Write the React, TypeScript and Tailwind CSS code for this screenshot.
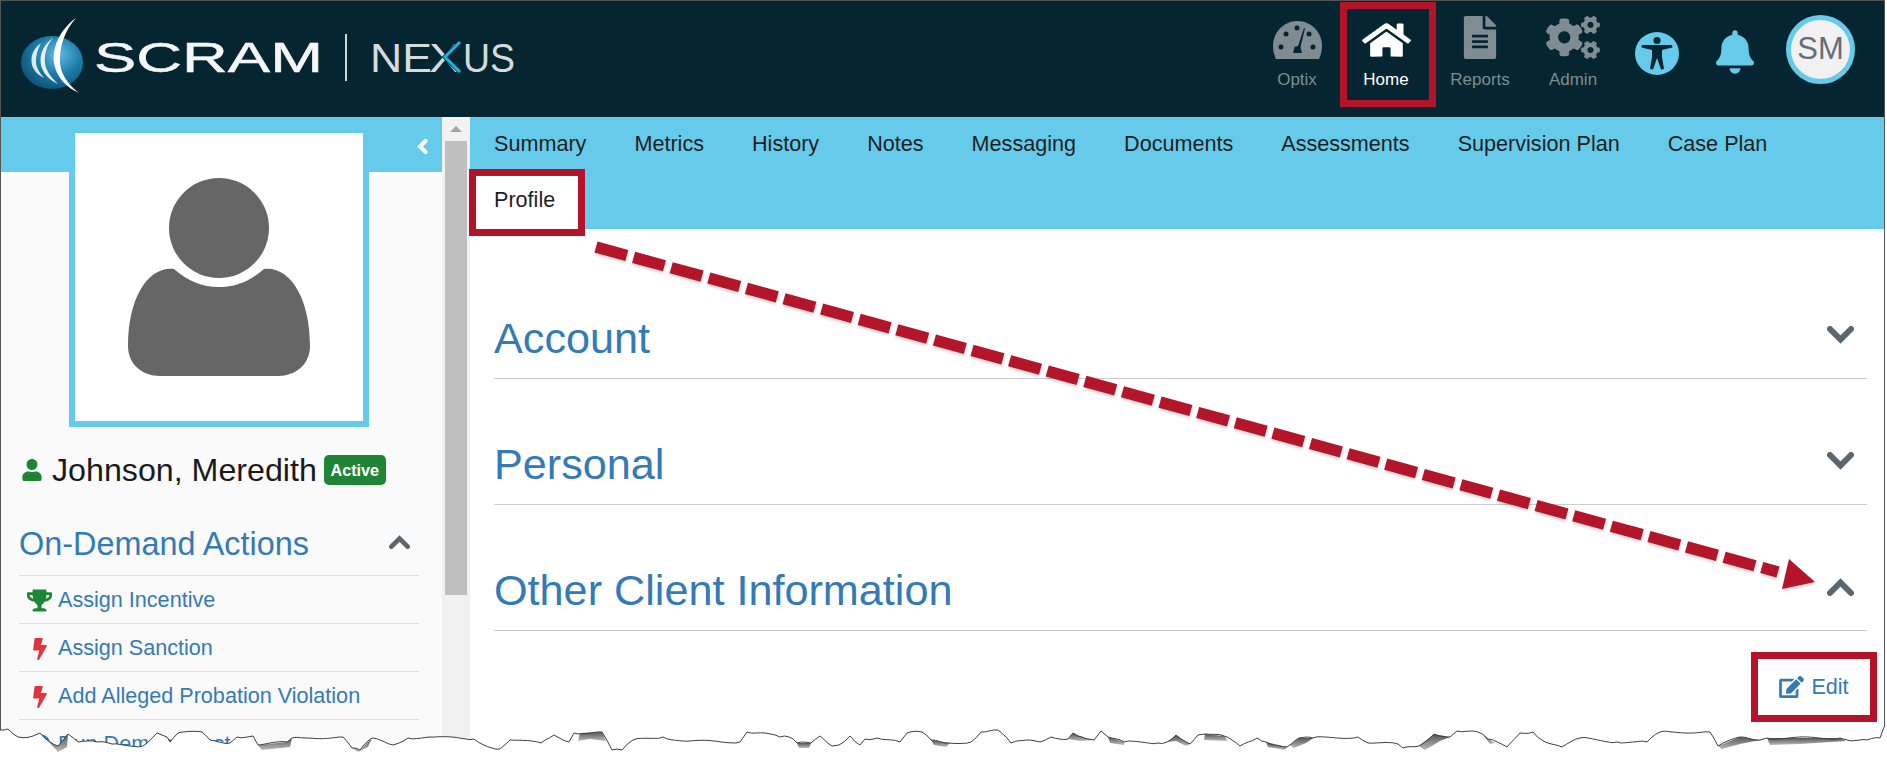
import { ReactNode } from 'react';
import { FaBell, FaBolt, FaCheckCircle, FaCogs, FaEdit, FaFileAlt, FaHome, FaTrophy, FaUser } from 'react-icons/fa';

const tabs = ['Summary', 'Metrics', 'History', 'Notes', 'Messaging', 'Documents', 'Assessments', 'Supervision Plan', 'Case Plan'];

// torn paper edge along the bottom of the screenshot
const tearPoints: number[][] = [
  [0, 730], [8, 729], [18, 737], [33, 736], [40, 733], [50, 742], [58, 746], [68, 734], [78, 742], [97, 742], [112, 744], [143, 746],
  [157, 733], [167, 737], [170, 742], [178, 733], [202, 732], [210, 740], [230, 743], [237, 737], [253, 736], [258, 745], [287, 742],
  [292, 738], [306, 738], [343, 737], [352, 748], [360, 750], [372, 738], [393, 745], [408, 738], [429, 737], [474, 739], [492, 748],
  [500, 749], [510, 740], [541, 743], [554, 735], [569, 742], [574, 733], [602, 732], [612, 750], [622, 750], [633, 740], [663, 737],
  [684, 741], [740, 742], [747, 732], [765, 733], [780, 737], [789, 737], [797, 743], [811, 743], [820, 736], [832, 746], [839, 745],
  [850, 736], [860, 745], [865, 739], [877, 738], [900, 742], [907, 733], [922, 732], [931, 740], [945, 743], [971, 742], [981, 732],
  [998, 730], [1011, 743], [1030, 740], [1040, 742], [1051, 737], [1068, 739], [1073, 733], [1082, 737], [1094, 740], [1101, 731],
  [1108, 737], [1124, 742], [1158, 743], [1167, 742], [1176, 735], [1190, 744], [1198, 735], [1205, 734], [1224, 736], [1240, 746],
  [1257, 738], [1266, 742], [1287, 747], [1299, 738], [1313, 738], [1358, 737], [1368, 743], [1398, 744], [1403, 748], [1419, 746],
  [1434, 734], [1450, 737], [1457, 731], [1478, 732], [1488, 739], [1507, 747], [1520, 733], [1533, 732], [1542, 740], [1562, 747],
  [1580, 738], [1617, 742], [1647, 742], [1660, 732], [1710, 732], [1718, 746], [1740, 737], [1760, 740], [1767, 738], [1840, 738],
  [1847, 740], [1867, 740], [1880, 738], [1884, 727],
];

function roughen(points: number[][]) {
  const out: string[] = [];
  let n = 0;
  points.forEach((p, i) => {
    out.push(`${p[0]},${p[1]}`);
    const next = points[i + 1];
    if (!next) return;
    const steps = Math.floor((next[0] - p[0]) / 4);
    for (let s = 1; s < steps; s++) {
      n += 1;
      const t = s / steps;
      const jitter = Math.sin(n * 12.9898) * 1.1;
      out.push(`${(p[0] + (next[0] - p[0]) * t).toFixed(1)},${(p[1] + (next[1] - p[1]) * t + jitter).toFixed(1)}`);
    }
  });
  return out.join(' ');
}

const tear = roughen(tearPoints);

const tearShades = [
  '48,741 58,746 68,734 67,747 58,752',
  '258,745 287,742 292,738 290,747 262,750',
  '352,748 360,750 372,738 368,747 358,752',
  '580,733 602,732 606,741 590,739 578,741',
  '797,743 811,743 809,748 799,748',
  '931,740 950,743 946,747 934,745',
  '1068,739 1073,733 1082,737 1094,740 1080,741',
  '1108,737 1124,742 1124,745 1110,743',
  '1167,742 1176,735 1190,744 1186,746 1176,741',
  '1205,734 1224,736 1228,741 1204,740',
  '1266,742 1287,747 1285,750 1268,747',
  '1290,745 1299,738 1313,738 1306,743 1294,748',
  '1419,746 1434,734 1450,737 1440,741 1425,750',
  '1483,735 1488,739 1495,743 1490,744',
  '1718,746 1740,737 1760,740 1740,744 1722,749',
  '1767,738 1840,738 1846,741 1800,744 1770,745',
];

function Logo() {
  return (
    <svg className="shrink-0" width="530" height="116" viewBox="0 0 530 116">
      <defs>
        <radialGradient id="sphere" cx="0.6" cy="0.35" r="0.75">
          <stop offset="0" stopColor="#62bde2" />
          <stop offset="0.5" stopColor="#1c7ba8" />
          <stop offset="1" stopColor="#0a4a6e" />
        </radialGradient>
      </defs>
      <ellipse cx="51" cy="61.5" rx="31" ry="26.5" fill="url(#sphere)" />
      <path d="M75 17 C58 29 51 48 53 62 C55 76 66 87 78 92 C68 84 60 74 59 62 C58 46 64 29 75 17Z" fill="#fff" />
      <path d="M52 37 C42 44 38 54 40 64 C42 72 48 79 57 83 C50 76 45 70 44 62 C43 53 46 44 52 37Z" fill="#e8f2f7" />
      <path d="M40 42 C32 48 29 56 31 64 C33 70 37 74 43 77 C38 71 35 66 35 60 C35 54 37 48 40 42Z" fill="#dbe9f0" />
      <text x="93" y="71" fontFamily="'Liberation Sans', sans-serif" fontSize="43" fill="#f4f6f7" stroke="#f4f6f7" strokeWidth="0.5" textLength="229" lengthAdjust="spacingAndGlyphs">
        SCRAM
      </text>
      <rect x="344" y="33" width="2" height="47" fill="#cfd6d8" />
      <g fontFamily="'Liberation Sans', sans-serif" fontSize="41" fill="#d5dbdd">
        <text x="369" y="71" textLength="62" lengthAdjust="spacingAndGlyphs">NE</text>
        <text x="428" y="71" textLength="32" lengthAdjust="spacingAndGlyphs">X</text>
        <text x="462" y="71" textLength="52" lengthAdjust="spacingAndGlyphs">US</text>
      </g>
      <path d="M460 41 L445 56 L460 71" fill="none" stroke="#052630" strokeWidth="6" />
      <path d="M459 41 L444 56 L459 71" fill="none" stroke="#1fb2de" strokeWidth="3" />
    </svg>
  );
}

function Gauge() {
  return (
    <svg width="49" height="38" viewBox="0 0 49 38">
      <path d="M3 38 C1 34 0 29 0 25 C0 11 11 0 24.5 0 C38 0 49 11 49 25 C49 29 48 34 46 38Z" fill="#7f8c92" />
      <g fill="#052630">
        <circle cx="8" cy="26" r="2.5" />
        <circle cx="13" cy="13" r="2.5" />
        <circle cx="24" cy="7" r="2.5" />
        <circle cx="36" cy="13" r="2.5" />
        <circle cx="40" cy="26" r="2.5" />
        <path d="M31 7 L32 7.5 L27.5 26 L29 32 L20 32 L21.5 26 L25 25Z" />
      </g>
    </svg>
  );
}

function AccessIcon() {
  return (
    <svg className="ml-[19px] mt-[31px]" width="44" height="43" viewBox="0 0 44 43">
      <ellipse cx="22" cy="21.5" rx="22" ry="21.5" fill="#66cbeb" />
      <circle cx="22" cy="8.5" r="3.6" fill="#052630" />
      <path d="M7 13 L37 13 L37.5 15.5 L27 18 L27 25 L29 37 L26 37.5 L22 26 L18 37.5 L15 37 L17 25 L17 18 L6.5 15.5Z" fill="#052630" />
    </svg>
  );
}

function Chevron({ up, className }: { up?: boolean; className: string }) {
  return (
    <svg className={className} viewBox="0 0 27 18" preserveAspectRatio="none">
      <polyline points={up ? '3,15 13.5,4.5 24,15' : '3,3 13.5,13.5 24,3'} fill="none" stroke="#5b6770" strokeWidth="6" strokeLinecap="round" strokeLinejoin="miter" />
    </svg>
  );
}

function NavItem({ label, icon, active, width }: { label: string; icon: ReactNode; active?: boolean; width: string }) {
  return (
    <div className={`relative flex h-[116px] flex-col items-center ${width} ${active ? 'text-white' : 'text-[#7f8c92]'}`}>
      <div className="mt-[14px] flex h-[44px] items-end justify-center">{icon}</div>
      <div className="mt-[10px] text-[17px] leading-[22px]">{label}</div>
      {active && <div className="absolute left-[-2px] right-[-6px] top-[1px] h-[105px] border-[7px] border-[#b31429]" />}
    </div>
  );
}

function Section({ title, open }: { title: string; open?: boolean }) {
  return (
    <div className="flex h-[126px] items-end justify-between border-b border-[#ccc] pb-[14px] pr-[13px]">
      <span className="text-[43.2px] leading-[52px] text-[#337ab7]">{title}</span>
      <Chevron up={open} className="mb-[20px] h-[18px] w-[27px]" />
    </div>
  );
}

function ActionRow({ icon, label }: { icon: ReactNode; label: string }) {
  return (
    <div className="flex h-[48px] items-center border-b border-[#ddd] pl-[8px] pt-[2px]">
      <div className="flex w-[25px] justify-center">{icon}</div>
      <span className="ml-[6px] text-[21.6px] text-[#337ab7]">{label}</span>
    </div>
  );
}

export default function App() {
  return (
    <div className="relative h-[763px] w-[1887px] overflow-hidden bg-white font-['Liberation_Sans',Arial,sans-serif]">
      <div className="h-full w-[1885px] border-x border-t border-[#555]">
        {/* Header */}
        <header className="flex h-[116px] items-start justify-between bg-[#052630] pr-[29px]">
          <Logo />
          <div className="flex items-start">
            <NavItem label="Optix" width="w-[90px]" icon={<Gauge />} />
            <NavItem label="Home" width="w-[88px]" active icon={<FaHome className="h-[38px] w-[49px]" preserveAspectRatio="none" />} />
            <NavItem label="Reports" width="w-[100px]" icon={<FaFileAlt className="h-[43px] w-[34px]" />} />
            <NavItem label="Admin" width="w-[86px]" icon={<FaCogs className="h-[43px] w-[54px]" />} />
            <AccessIcon />
            <FaBell className="ml-[37px] mt-[29px] h-[44px] w-[38px] text-[#66cbeb]" />
            <div className="ml-[32px] mt-[14px] flex h-[69px] w-[69px] items-center justify-center rounded-full border-[5px] border-[#66cbeb] bg-[#f1f1f1] text-[31px] text-[#666e7a]">
              SM
            </div>
          </div>
        </header>

        <div className="flex h-[646px]">
          {/* Sidebar */}
          <aside className="relative w-[441px] shrink-0 bg-[#fafafa]">
            <div className="absolute inset-x-0 top-0 h-[55px] bg-[#66cbeb]">
              <svg className="absolute right-[14px] top-[22px]" width="11" height="15" viewBox="0 0 11 15">
                <polyline points="8.5,2 3,7.5 8.5,13" fill="none" stroke="#fff" strokeWidth="4" strokeLinecap="round" />
              </svg>
            </div>
            <div className="relative ml-[68px] mt-[10px] flex h-[300px] w-[300px] items-center justify-center border-[6px] border-[#66cbeb] bg-white">
              <svg width="182" height="198" viewBox="0 0 182 198">
                <circle cx="91" cy="50" r="50" fill="#666" />
                <path
                  d="M46 91 C60 103 74 109 91 109 C108 109 122 103 136 91 C162 88 182 120 182 168 C182 186 168 198 150 198 L32 198 C14 198 0 186 0 168 C0 120 20 88 46 91Z"
                  fill="#666"
                />
              </svg>
            </div>
            <div className="mt-[25px] flex h-[36px] items-center pl-[21px]">
              <FaUser className="h-[22px] w-[20px] text-[#1e8537]" />
              <span className="ml-[10px] text-[32.2px] leading-[36px] text-[#1a1a1a]">Johnson, Meredith</span>
              <span className="ml-[7px] flex h-[30px] w-[62px] items-center justify-center rounded-[5px] bg-[#1e8537] text-[16.2px] font-bold text-white">Active</span>
            </div>
            <div className="ml-[18px] mt-[38px] w-[400px]">
              <div className="flex h-[50px] items-start justify-between border-b border-[#ddd] pr-[9px]">
                <span className="text-[32.4px] leading-[36px] text-[#337ab7]">On-Demand Actions</span>
                <Chevron up className="mt-[9px] h-[14px] w-[21px]" />
              </div>
              <ActionRow icon={<FaTrophy className="h-[23px] w-[25px] text-[#1e8537]" />} label="Assign Incentive" />
              <ActionRow icon={<FaBolt className="h-[22px] w-[14px] text-[#e0323f]" />} label="Assign Sanction" />
              <ActionRow icon={<FaBolt className="h-[22px] w-[14px] text-[#e0323f]" />} label="Add Alleged Probation Violation" />
              <ActionRow icon={<FaCheckCircle className="h-[22px] w-[22px] text-[#337ab7]" />} label="Run Demand Test" />
            </div>
          </aside>

          {/* Scrollbar */}
          <div className="flex w-[28px] shrink-0 flex-col items-center bg-[#f1f1f1]">
            <div className="mt-[9px] h-0 w-0 border-x-[6px] border-b-[6px] border-x-transparent border-b-[#a3a3a3]" />
            <div className="mt-[9px] h-[454px] w-[22px] bg-[#bfbfbf]" />
          </div>

          {/* Main */}
          <main className="flex-1 bg-white">
            <nav className="flex h-[112px] flex-wrap content-start bg-[#66cbeb]">
              {tabs.map((t) => (
                <div key={t} className="flex h-[56px] items-center px-[24px] pb-[2px] text-[21.6px] text-[#1f1f1f]">
                  {t}
                </div>
              ))}
              <div className="relative flex h-[56px] items-center bg-white px-[24px] pb-[2px] text-[21.6px] text-[#1f1f1f]">
                Profile
                <div className="absolute -left-[1px] -top-[4px] bottom-[-7px] right-[-6px] border-[7px] border-[#b31429]" />
              </div>
            </nav>
            <div className="pl-[24px] pr-[17px] pt-[24px]">
              <Section title="Account" />
              <Section title="Personal" />
              <Section title="Other Client Information" open />
              <div className="mr-[-10px] mt-[21px] flex justify-end">
                <div className="flex h-[70px] w-[126px] items-center justify-center gap-[7px] border-[7px] border-[#b31429] text-[21.6px] text-[#337ab7]">
                  <FaEdit className="h-[22px] w-[25px]" />
                  Edit
                </div>
              </div>
            </div>
          </main>
        </div>
      </div>

      {/* Annotation arrow and torn edge */}
      <svg className="pointer-events-none absolute inset-0" width="1887" height="763" viewBox="0 0 1887 763">
        <defs>
          <filter id="soft" x="-5%" y="-5%" width="110%" height="110%">
            <feDropShadow dx="0" dy="2" stdDeviation="1.5" floodColor="#000" floodOpacity="0.18" />
          </filter>
          <linearGradient id="tearShade" x1="0" y1="0" x2="0" y2="1">
            <stop offset="0" stopColor="#555" />
            <stop offset="1" stopColor="#bbb" />
          </linearGradient>
        </defs>
        <g filter="url(#soft)">
          <line x1="596" y1="247" x2="1778" y2="572" stroke="#b31429" strokeWidth="11.5" strokeDasharray="32 7" />
          <polygon points="1789,559 1815,582 1782,589" fill="#b31429" />
        </g>

        <polygon points={`${tear} 1887,727 1887,763 0,763`} fill="#fff" />
        <g fill="url(#tearShade)">
          {tearShades.map((s) => (
            <polygon key={s} points={s} />
          ))}
        </g>
        <polyline points={tear} fill="none" stroke="#3f3f3f" strokeWidth="1" />
      </svg>
    </div>
  );
}
